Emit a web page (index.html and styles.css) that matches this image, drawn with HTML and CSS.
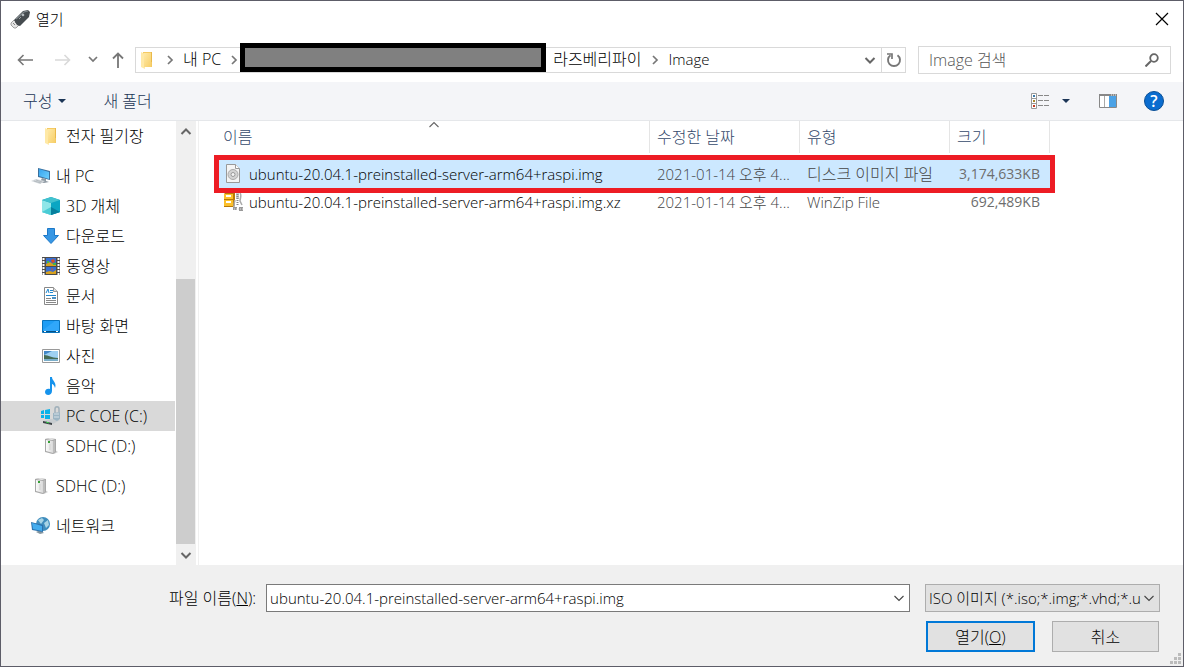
FILE: index.html
```
<!DOCTYPE html>
<html lang="ko">
<head>
    <meta charset="UTF-8">
    <meta name="viewport" content="width=device-width, initial-scale=1.0">
    <title>열기</title>
    <link rel="stylesheet" href="styles.css">
</head>
<body>
    <!-- Shared icons -->
    <svg class="defs" aria-hidden="true">
        <defs>
            <linearGradient id="gDrive" x1="0" y1="0" x2="1" y2="0"><stop offset="0" stop-color="#fafafa"/><stop offset="1" stop-color="#d9d9d9"/></linearGradient>
            <linearGradient id="gScreen" x1="0" y1="0" x2="1" y2="1"><stop offset="0" stop-color="#36a3ee"/><stop offset="1" stop-color="#6ed0ff"/></linearGradient>
            <linearGradient id="gFolder" x1="0" y1="0" x2="1" y2="1"><stop offset="0" stop-color="#ffe9a6"/><stop offset="1" stop-color="#f7cf69"/></linearGradient>
        </defs>
        <symbol id="folder" viewBox="0 0 18 18">
            <path d="M5 1h9v15H5z" fill="#f5ca62"/>
            <path d="M13 1h1v10h-1z" fill="#e9b94b"/>
            <path d="M3 1l4 2v15l-4-2z" fill="#ffe9a6"/>
            <path d="M6 2h7v14H6z" fill="url(#gFolder)"/>
        </symbol>
        <symbol id="drive" viewBox="0 0 18 18">
            <path d="M7 16l5 1 4-2-3-2z" fill="#d0d0d0"/>
            <path d="M3 2l4-1 7 1v13l-3 2-8-2z" fill="#a8a8a8"/>
            <path d="M4 3l7 1v12l-7-2z" fill="url(#gDrive)"/>
            <path d="M4 2l4-1 5 1-3 1z" fill="#e6e6e6"/>
            <path d="M11 4l2-1v12l-2 1z" fill="#bcbcbc"/>
            <path d="M6 4h2v2H6z" fill="#35a035"/>
            <path d="M8 7v6" stroke="#cfcfcf"/>
        </symbol>
        <symbol id="chevron" viewBox="0 0 8 12">
            <path d="M2 2l4 4-4 4" fill="none" stroke="#777" stroke-width="1.7"/>
        </symbol>
        <symbol id="down" viewBox="0 0 12 8">
            <path d="M1.500 2l4.500 4.500L10.500 2" fill="none" stroke="currentColor" stroke-width="var(--w, 1.1)"/>
        </symbol>
    </svg>

    <div class="dialog">
        <header class="title-bar">
            <svg class="icon-20" viewBox="0 0 20 20">
                <path d="M1 14l3-3 5 5-3 3H4l-3-3z" fill="#e4e4e4" stroke="#8c8c8c" stroke-width=".8"/>
                <path d="M3 14l2 2M5 13l2 2" stroke="#777" stroke-width=".9"/>
                <path d="M4 11L13 2l5-1 2 2-1 5-9 9-3-1z" fill="#454b4f"/>
                <path d="M6 10l8-7 4-1" fill="none" stroke="#81898d" stroke-width="1.2"/>
                <circle cx="13" cy="6" r="1.3" fill="#b4babd"/>
                <path d="M9 10l2-2" stroke="#9ba2a5"/>
            </svg>
            <h1>열기</h1>
            <button class="close" aria-label="닫기">
                <svg class="icon-14" viewBox="0 0 14 14"><path d="M1 1l12 12M13 1L1 13" stroke="#000" stroke-width="1.2"/></svg>
            </button>
        </header>

        <nav class="nav-row">
            <button class="nav-button" aria-label="뒤로">
                <svg class="icon-16" viewBox="0 0 16 16"><path d="M16 8H1.500M6.500 3l-5 5 5 5" fill="none" stroke="#777" stroke-width="1.6"/></svg>
            </button>
            <button class="nav-button" aria-label="앞으로" disabled>
                <svg class="icon-16" viewBox="0 0 16 16"><path d="M0 8h14.500M9.500 3l5 5-5 5" fill="none" stroke="#d9d9d9" stroke-width="1.6"/></svg>
            </button>
            <button class="nav-button small" aria-label="최근 위치">
                <svg class="arrow-small" viewBox="0 0 10 7"><path d="M1 1l4 4 4-4" fill="none" stroke="#777" stroke-width="1.7"/></svg>
            </button>
            <button class="nav-button small" aria-label="위로">
                <svg class="icon-16" viewBox="0 0 16 16"><path d="M8 16V1.500M3 6.500l5-5 5 5" fill="none" stroke="#777" stroke-width="1.8"/></svg>
            </button>

            <div class="address">
                <svg class="icon-18 address-icon"><use href="#folder"/></svg>
                <svg class="chevron"><use href="#chevron"/></svg>
                <a href="#">내 PC</a>
                <svg class="chevron"><use href="#chevron"/></svg>
                <span class="masked"></span>
                <a href="#">라즈베리파이</a>
                <svg class="chevron"><use href="#chevron"/></svg>
                <a href="#" class="latin">Image</a>
                <button class="address-drop" aria-label="이전 위치"><svg class="arrow bold"><use href="#down"/></svg></button>
                <button class="refresh" aria-label="새로 고침">
                    <svg class="icon-16" viewBox="0 0 16 16"><path d="M4.500 3.200A6 6 0 1 0 11.500 3.200" fill="none" stroke="#777" stroke-width="1.900"/><path d="M1 2h5v5" fill="none" stroke="#777" stroke-width="1.700"/></svg>
                </button>
            </div>

            <div class="search">
                <input type="search" aria-label="Image 검색" placeholder="Image 검색">
                <svg class="icon-14" viewBox="0 0 14 14"><circle cx="9" cy="5" r="3.800" fill="none" stroke="#666" stroke-width="1.800"/><path d="M6 8l-5.500 5.500" stroke="#666" stroke-width="2"/></svg>
            </div>
        </nav>

        <div class="toolbar">
            <button>구성 <svg class="triangle" viewBox="0 0 8 4"><path d="M0 0h8L4 4z" fill="#1b3556"/></svg></button>
            <button>새 폴더</button>
            <div class="toolbar-right">
                <button aria-label="보기">
                    <svg class="icon-18" viewBox="0 0 18 18">
                        <path d="M.5 1.500h5v15h-5zM.5 6.500h5M.5 11.500h5" fill="#fff" stroke="#999"/>
                        <path d="M2 3h2v2H2z" fill="#3a78a8"/><path d="M2 8h2v2H2z" fill="#a8862c"/><path d="M2 13h2v2H2z" fill="#c23a22"/>
                        <path d="M7 3.500h5M13 3.500h5M7 8.500h5M13 8.500h5M7 13.500h5M13 13.500h5" stroke="#888"/>
                    </svg>
                </button>
                <button aria-label="보기 옵션"><svg class="triangle" viewBox="0 0 8 4"><path d="M0 0h8L4 4z" fill="#1b3556"/></svg></button>
                <button aria-label="미리 보기 창">
                    <svg class="icon-18" viewBox="0 0 18 18">
                        <path d="M.5 2.500h17v13H.5z" fill="#fff" stroke="#888"/>
                        <path d="M0 2h18v2H0z" fill="#888"/><path d="M5.500 4v11" stroke="#aaa"/>
                        <path d="M10 4h7v11h-7z" fill="#4ba2e6"/><path d="M12 3h1M14 3h1M16 3h1" stroke="#eee"/>
                    </svg>
                </button>
                <button class="help" aria-label="도움말">?</button>
            </div>
        </div>

        <main class="content">
            <aside class="sidebar">
                <ul class="tree">
                    <li class="child"><svg class="icon-18"><use href="#folder"/></svg>전자 필기장</li>
                    <li class="group">
                        <svg class="icon-20" viewBox="0 0 20 20">
                            <path d="M7 2l12 3v9L7 11z" fill="#3b6f9c"/><path d="M8 3l10 3v7L8 10z" fill="url(#gScreen)"/>
                            <path d="M11 12l4 1v2l3 1-5 1-4-1z" fill="#8f9aa3"/>
                            <path d="M0 15l5-2 9 2-5 3z" fill="#d2d7db"/><path d="M3 15l7 2M5 14l6 2" stroke="#a8afb4" stroke-width=".7"/>
                        </svg>내 PC
                    </li>
                    <li class="child">
                        <svg class="icon-18" viewBox="0 0 18 18"><path d="M9 0l9 3v12l-9 3-9-3V3z" fill="#13a0b8"/><path d="M0 3l9 3v12l-9-3z" fill="#8fe6e8"/><path d="M9 6l9-3v12l-9 3z" fill="#0ba6c3"/><path d="M0 3l9-3 9 3-9 3z" fill="#42c2cf"/><path d="M0 15l9-5v8z" fill="#4accd5"/><path d="M9 10l9 5-9 3z" fill="#087f9d"/></svg>3D 개체
                    </li>
                    <li class="child">
                        <svg class="icon-18" viewBox="0 0 18 18"><path d="M5.500 1.500h7v7h4L9 16.500 1.500 8.500h4z" fill="#3797e4" stroke="#1c78c8"/></svg>다운로드
                    </li>
                    <li class="child">
                        <svg class="icon-18" viewBox="0 0 18 18"><path d="M0 0h18v18H0z" fill="#4c4c4c"/><path d="M4 1h10v8H4zM4 10h10v7H4z" fill="#386fd0"/><path d="M4 7l4-2 3 2 3-1v3H4zM4 15l4-1 3 1 3-2v4H4z" fill="#d9a21e"/><path d="M9 3l3-1 1 3-3 1zM9 11l2 1-1 2z" fill="#d84d25"/><path d="M5 4h2v2H5zM11 6h3v2h-3z" fill="#43b64d"/><path d="M1.500 1v17M16.500 1v17" stroke="#fff" stroke-width="2" stroke-dasharray="2 1"/></svg>동영상
                    </li>
                    <li class="child">
                        <svg class="icon-18" viewBox="0 0 18 18"><path d="M2.500.5h9l4 4v13h-13z" fill="#fff" stroke="#888"/><path d="M11.500.5v4h4" fill="#ddd" stroke="#999"/><path d="M4 6l2-4 1 4M8 3.500h3M8 5.500h3M4 8.500h10" fill="none" stroke="#2087ce"/><path d="M4 11.500h5M4 13.500h10M4 15.500h10" stroke="#888"/><path d="M10 10h4v2h-4z" fill="#4a8fc3"/></svg>문서
                    </li>
                    <li class="child">
                        <svg class="icon-18" viewBox="0 0 18 18"><path d="M.5 3.500h17v12H.5z" fill="#1e9df5" stroke="#0873bd"/><path d="M1 13L13 4h4v10H1z" fill="#42b1ff" opacity=".5"/><path d="M1 14.500h16" stroke="#075083"/><path d="M2 14.500h2M14 14.500h2" stroke="#fff"/></svg>바탕 화면
                    </li>
                    <li class="child">
                        <svg class="icon-18" viewBox="0 0 18 18"><path d="M.5 2.500h17v13H.5z" fill="#fff" stroke="#999"/><path d="M2 4h14v10H2z" fill="#9ed0f2"/><path d="M2 4h8L2 8z" fill="#4287c6"/><path d="M2 8c5 0 7 3 14 3v1H2z" fill="#466c56"/><path d="M2 12h14v2H2z" fill="#7aaeca"/></svg>사진
                    </li>
                    <li class="child">
                        <svg class="icon-18" viewBox="0 0 18 18"><path d="M8 0h2c0 4 5 5 3 11-1-3-2-4-3-4v7c0 5-7 5-7 1 0-3 3-4 5-3z" fill="#1693ec"/></svg>음악
                    </li>
                    <li class="child selected">
                        <svg class="icon-20" viewBox="0 0 20 20"><path d="M0 5l3-1v4H0zM4 4l5-1v5H4zM0 9h3v3H0zM4 9h5v4H4z" fill="#0ab2e9"/><path d="M2 15l8-2 9 1-7 4-10-2z" fill="#c8cdd0"/><path d="M2 15l9 2v2l-9-2z" fill="#3c4347"/><path d="M5 16l3 1" stroke="#35d34a"/><path d="M14 7V3c0-3 4-3 4 0v3" fill="none" stroke="#a0b0ba" stroke-width="1.500"/><path d="M12 7l7-1v7l-3 2-4-2z" fill="#9cb5c4"/><path d="M13 8h5M13 11h5" stroke="#d6e1e8"/></svg>PC COE (C:)
                    </li>
                    <li class="child"><svg class="icon-18"><use href="#drive"/></svg>SDHC (D:)</li>
                    <li class="group"><svg class="icon-18"><use href="#drive"/></svg>SDHC (D:)</li>
                    <li class="group">
                        <svg class="icon-20" viewBox="0 0 20 20"><circle cx="12" cy="8" r="7" fill="#3f8dbd"/><path d="M7 4l4-2 2 2-3 4zM13 7l4-3 1 5-3 3z" fill="#a8d4e6"/><path d="M9 14l4 3-4 1-4-2z" fill="#8496a0"/><path d="M0 6l12 3v7L1 14z" fill="#2a71ad"/><path d="M1 7l10 3v5L2 13z" fill="#43acee"/></svg>네트워크
                    </li>
                </ul>
                <div class="scrollbar">
                    <button aria-label="위로 스크롤"><svg class="arrow bold flip"><use href="#down"/></svg></button>
                    <div class="track"><div class="thumb"></div></div>
                    <button aria-label="아래로 스크롤"><svg class="arrow bold"><use href="#down"/></svg></button>
                </div>
            </aside>

            <section class="files">
                <table>
                    <thead>
                        <tr>
                            <th class="name">이름<svg class="sort flip"><use href="#down"/></svg></th>
                            <th class="date">수정한 날짜</th>
                            <th class="type">유형</th>
                            <th class="size">크기</th>
                        </tr>
                    </thead>
                    <tbody>
                        <tr class="spacer"><td colspan="4"></td></tr>
                        <tr class="marked">
                            <td><div class="file latin">
                                <svg class="icon-20" viewBox="0 0 20 20"><path d="M3.500.5h9l4 4v14h-13z" fill="#f5f5f5" stroke="#999"/><path d="M12.500.5v4h4" fill="#fff" stroke="#999"/><circle cx="10" cy="10.500" r="5" fill="#d3d3d3" stroke="#aaa"/><circle cx="10" cy="10.500" r="2" fill="#f5f5f5" stroke="#999"/></svg>
                                <span>ubuntu-20.04.1-preinstalled-server-arm64+raspi.img</span>
                            </div></td>
                            <td class="latin">2021-01-14 오후 4...</td>
                            <td>디스크 이미지 파일</td>
                            <td class="number">3,174,633KB</td>
                        </tr>
                        <tr>
                            <td><div class="file latin">
                                <svg class="icon-20" viewBox="0 0 20 20"><path d="M1 2l2-2h9v13l-2 2H1z" fill="#b87908"/><path d="M1 2h9v5H1zM1 8h9v6H1z" fill="#fcc02b"/><path d="M3 4h5M3 10h5" stroke="#fff" stroke-width="2"/><path d="M13 1h3v6h-3z" fill="#ccc"/><path d="M14.500 0v14" stroke="#888" stroke-width="2" stroke-dasharray="1 1"/><path d="M17 1c2 2 0 6 0 8l2 4M12 8c-1 3-1 5-1 7" fill="none" stroke="#aaa" stroke-width="1.500"/><path d="M10 15h4v3h-4zM16 15h4v4h-4z" fill="#999"/><path d="M11 17h9" stroke="#ddd" stroke-dasharray="1 1"/></svg>
                                <span>ubuntu-20.04.1-preinstalled-server-arm64+raspi.img.xz</span>
                            </div></td>
                            <td class="latin">2021-01-14 오후 4...</td>
                            <td class="latin">WinZip File</td>
                            <td class="number">692,489KB</td>
                        </tr>
                    </tbody>
                </table>
            </section>
        </main>

        <footer class="footer">
            <label for="fileName">파일 이름(<u>N</u>):</label>
            <div class="combo">
                <input type="text" id="fileName" class="latin" value="ubuntu-20.04.1-preinstalled-server-arm64+raspi.img">
                <svg class="arrow"><use href="#down"/></svg>
            </div>
            <div class="actions">
                <div class="combo filter">
                    <select class="latin" aria-label="파일 형식"><option>ISO 이미지 (*.iso;*.img;*.vhd;*.u</option></select>
                    <svg class="arrow"><use href="#down"/></svg>
                </div>
                <div class="buttons">
                    <button class="primary">열기(<u>O</u>)</button>
                    <button>취소</button>
                </div>
            </div>
            <svg class="grip" viewBox="0 0 11 11"><path d="M8 0h3v3H8zM4 4h3v3H4zM8 4h3v3H8zM0 8h3v3H0zM4 8h3v3H4zM8 8h3v3H8z" fill="#bbb"/></svg>
        </footer>
    </div>
</body>
</html>
```

FILE: styles.css
```
* {
    box-sizing: border-box;
}
body {
    margin: 0;
    font-family: "Open Sans", "Noto Sans CJK KR", sans-serif;
    font-size: 16px;
    font-weight: 300;
    line-height: 20px;
    color: #000;
}
button, input, select {
    font: inherit;
    color: inherit;
}
button {
    display: flex;
    align-items: center;
    justify-content: center;
    padding: 0;
    border: none;
    background: none;
}
a {
    color: inherit;
    text-decoration: none;
}
svg {
    display: block;
    flex: none;
}
.latin {
    font-size: 15px;
}
.defs {
    position: absolute;
    width: 0;
    height: 0;
}
.icon-14 { width: 14px; height: 14px; }
.icon-16 { width: 16px; height: 16px; }
.icon-18 { width: 18px; height: 18px; }
.icon-20 { width: 20px; height: 20px; }
.arrow {
    width: 12px;
    height: 8px;
    color: #444;
}
.bold {
    --w: 2;
    color: #666;
}
.flip {
    transform: rotate(180deg);
}
.triangle {
    width: 8px;
    height: 4px;
}

.dialog {
    display: flex;
    flex-direction: column;
    min-height: 100vh;
    border: 1px solid #5d5d68;
    background: #fff;
}

/* Title bar */
.title-bar {
    display: flex;
    align-items: center;
    height: 36px;
    padding: 0 14px 0 9px;
}
.title-bar h1 {
    flex: 1;
    margin: 0 0 0 6px;
    font-size: 15px;
    font-weight: inherit;
}

/* Navigation */
.nav-row {
    display: flex;
    align-items: center;
    height: 45px;
    padding: 0 12px 0 16px;
}
.nav-button {
    width: 16px;
    margin-right: 22px;
}
.nav-button.small {
    margin-right: 9px;
}
.nav-button:nth-child(2) {
    margin-right: 14px;
}
.arrow-small {
    width: 10px;
    height: 7px;
}
.address {
    display: flex;
    flex: 1;
    align-items: center;
    height: 26px;
    border: 1px solid #d9d9d9;
    white-space: nowrap;
}
.address-icon {
    margin: 0 8px 0 2px;
}
.chevron {
    width: 8px;
    height: 12px;
    margin: 0 2px;
}
.address a {
    padding: 0 7px;
    line-height: 18px;
    margin-bottom: 2px;
}
.address .latin {
    padding-left: 8px;
}
.masked {
    flex: none;
    width: 306px;
    height: 29px;
    margin-bottom: 5px;
    border: 5px solid #000;
    background: #808080;
}
.address-drop {
    width: 22px;
    height: 24px;
    margin-left: auto;
}
.refresh {
    width: 24px;
    height: 24px;
    border-left: 1px solid #d9d9d9;
}
.search {
    display: flex;
    align-items: center;
    width: 253px;
    height: 28px;
    margin-left: 12px;
    padding-right: 11px;
    border: 1px solid #d9d9d9;
}
.search input {
    flex: 1;
    min-width: 0;
    padding: 0 10px;
    border: none;
    background: none;
}
.search input::placeholder {
    color: #555;
}

/* Toolbar */
.toolbar {
    display: flex;
    align-items: center;
    gap: 37px;
    height: 39px;
    padding: 0 19px 0 22px;
    border-bottom: 1px solid #e5e7ea;
    background: #f4f5f8;
    color: #1b3556;
}
.toolbar > button {
    gap: 6px;
}
.toolbar-right {
    display: flex;
    align-items: center;
    gap: 27px;
    margin-left: auto;
}
.toolbar-right button:nth-child(2) {
    margin: 0 2px 0 -14px;
}
.toolbar .help {
    width: 20px;
    height: 20px;
    border: 1px solid #0a4f96;
    border-radius: 50%;
    background: #0a6ccf;
    color: #fff;
    font-weight: 600;
}

/* Sidebar */
.content {
    display: flex;
    flex: 1;
}
.sidebar {
    display: flex;
    width: 198px;
    padding-right: 2px;
    border-right: 1px solid #f0f0f0;
}
.tree {
    flex: 1;
    margin: 0;
    padding: 0;
    list-style: none;
}
.tree li {
    display: flex;
    align-items: center;
    gap: 6px;
    height: 30px;
    margin-right: 1px;
    padding-left: 31px;
}
.tree .child {
    padding-left: 41px;
}
.tree .group {
    margin-top: 10px;
}
.tree .icon-20 {
    margin-left: -1px;
    margin-right: -1px;
}
.tree .selected {
    background: #d9d9d9;
}
.scrollbar {
    display: flex;
    flex-direction: column;
    width: 20px;
    background: #f0f0f0;
}
.scrollbar button {
    height: 21px;
}
.track {
    display: flex;
    flex: 1;
    flex-direction: column;
    justify-content: flex-end;
}
.thumb {
    width: 19px;
    height: 66%;
    background: #cdcdcd;
}

/* File list */
.files {
    flex: 1;
    padding: 0 133px 0 20px;
}
table {
    width: 100%;
    border-collapse: separate;
    border-spacing: 0;
    table-layout: fixed;
    white-space: nowrap;
}
th {
    position: relative;
    height: 32px;
    padding: 0 7px;
    border-right: 1px solid #e5e5e5;
    color: #34496b;
    font-weight: inherit;
    text-align: left;
}
.name {
    padding-left: 4px;
}
.date, .type {
    width: 150px;
}
.size {
    width: 100px;
}
.sort {
    position: absolute;
    top: 0;
    right: 0;
    left: 0;
    width: 12px;
    height: 8px;
    margin: 0 auto;
    color: #666;
}
.spacer td {
    height: 7px;
}
td {
    height: 28px;
    padding: 0 7px;
    color: #444;
}
td:first-child {
    padding: 0 4px;
    color: #000;
}
.spacer td:first-child {
    padding: 0;
}
.number {
    padding-right: 10px;
    color: #6d6d6d;
    font-size: 14px;
    font-weight: 400;
    text-align: right;
}
.file {
    display: flex;
    align-items: center;
    gap: 6px;
}
.marked {
    background: #cce8ff;
    outline: 5px solid #ed1c24;
}

/* Footer */
.footer {
    position: relative;
    display: flex;
    padding: 19px 23px 14px 168px;
    background: #f0f0f0;
}
.footer label {
    margin-right: 10px;
    line-height: 28px;
}
.combo {
    position: relative;
    flex: 1;
    height: 28px;
}
.combo input, .combo select {
    width: 100%;
    height: 28px;
    padding: 0 22px 0 3px;
    border: 1px solid #7a7a7a;
    border-radius: 0;
    background: #fff;
    appearance: none;
}
.combo .arrow {
    position: absolute;
    top: 10px;
    right: 5px;
    pointer-events: none;
}
.combo.filter select {
    padding-right: 16px;
    border-color: #adadad;
    background: #e1e1e1;
}
.actions {
    width: 235px;
    margin-left: 15px;
}
.buttons {
    display: flex;
    gap: 17px;
    margin-top: 9px;
    padding: 0 1px;
}
.buttons button {
    flex: 1;
    height: 31px;
    border: 1px solid #adadad;
    background: #e1e1e1;
}
.buttons .primary {
    border: 2px solid #0078d7;
}
.grip {
    position: absolute;
    right: 2px;
    bottom: 2px;
    width: 11px;
    height: 11px;
}
```
